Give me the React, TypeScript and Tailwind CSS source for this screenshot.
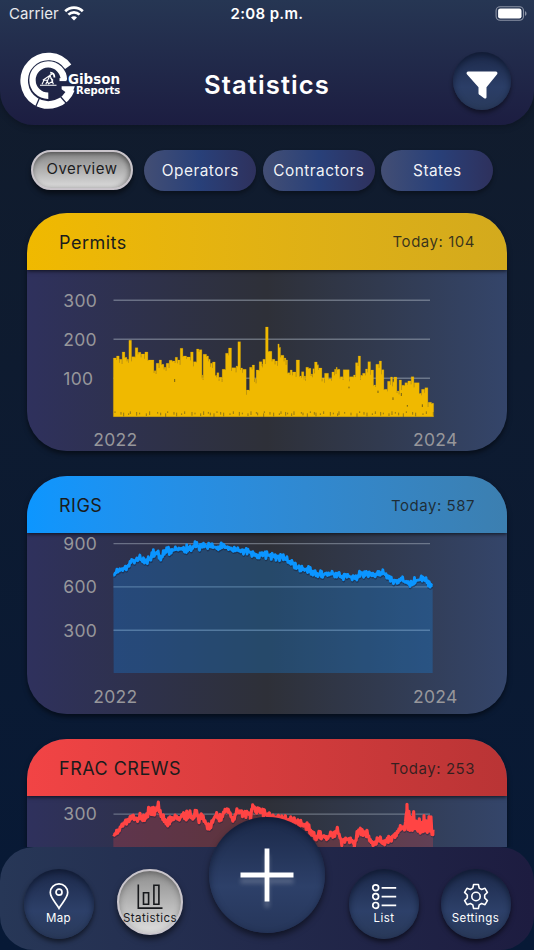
import type { ReactNode } from 'react';

type Point = [number, number];

// Chart samples are stored on a grid of a third of a pixel.
const permits: Point[] = [
  [280, 234], [289, 228], [298, 238], [306, 216], [315, 232], [321, 238], [326, 181], [335, 230], [345, 203], [354, 217],
  [363, 222], [374, 216], [384, 240], [402, 272], [408, 250], [417, 240], [425, 253], [432, 262], [438, 250], [447, 241],
  [457, 243], [465, 232], [473, 240], [480, 205], [489, 228], [500, 231], [511, 216], [520, 245], [529, 207], [537, 209],
  [546, 285], [549, 223], [560, 228], [566, 238], [571, 250], [577, 246], [586, 286], [590, 278], [597, 292], [606, 268],
  [616, 220], [625, 204], [635, 263], [648, 258], [653, 185], [662, 264], [668, 268], [679, 330], [688, 262], [696, 255],
  [704, 296], [708, 270], [717, 245], [726, 252], [728, 238], [736, 141], [745, 214], [756, 238], [765, 243], [773, 192],
  [778, 202], [782, 226], [792, 234], [798, 240], [803, 278], [810, 270], [817, 276], [828, 240], [839, 288], [844, 275],
  [852, 288], [857, 262], [866, 265], [873, 282], [878, 266], [883, 246], [892, 254], [896, 264], [906, 294], [913, 280],
  [926, 296], [935, 276], [943, 268], [948, 262], [952, 268], [960, 290], [969, 269], [988, 290], [1000, 285], [1006, 248],
  [1014, 228], [1022, 286], [1027, 280], [1036, 267], [1043, 245], [1052, 270], [1061, 315], [1067, 253], [1077, 243],
  [1085, 269], [1092, 328], [1102, 304], [1111, 291], [1118, 305], [1121, 291], [1131, 333], [1137, 300], [1145, 316],
  [1154, 308], [1163, 303], [1173, 290], [1182, 308], [1198, 340], [1204, 328], [1214, 323], [1224, 367], [1235, 370],
];

const rigs: Point[] = [
  [280, 316], [300, 300], [322, 291], [335, 272], [345, 273], [357, 264], [365, 268], [374, 280], [390, 268], [400, 252],
  [412, 252], [422, 262], [440, 243], [458, 242], [480, 236], [500, 237], [515, 238], [525, 227], [545, 232], [555, 228],
  [590, 233], [612, 230], [640, 240], [665, 243], [685, 245], [712, 258], [735, 255], [760, 258], [790, 264], [810, 277],
  [840, 297], [860, 300], [880, 307], [905, 316], [920, 313], [952, 312], [962, 322], [975, 317], [1005, 325], [1020, 312],
  [1045, 310], [1060, 317], [1075, 309], [1095, 312], [1115, 332], [1135, 332], [1145, 330], [1170, 345], [1185, 333],
  [1210, 328], [1225, 342], [1238, 348],
];

const fracCrews: Point[] = [
  [340, 314], [350, 312], [358, 300], [366, 284], [385, 270], [400, 258], [410, 270], [420, 262], [435, 272], [448, 240],
  [455, 247], [465, 247], [475, 230], [483, 250], [490, 268], [503, 286], [510, 264], [520, 270], [530, 262], [538, 268],
  [548, 252], [560, 258], [570, 254], [580, 270], [587, 250], [597, 266], [604, 262], [612, 272], [630, 300], [640, 270],
  [650, 250], [658, 268], [665, 268], [675, 240], [685, 242], [700, 272], [712, 243], [725, 247], [735, 255], [745, 250],
  [752, 260], [758, 228], [770, 242], [785, 247], [800, 255], [840, 268], [880, 272], [902, 282], [916, 288], [931, 302],
  [946, 320], [961, 318], [981, 325], [996, 313], [1012, 304], [1026, 336], [1046, 327], [1063, 342], [1073, 310],
  [1081, 298], [1091, 312], [1101, 307], [1111, 336], [1126, 342], [1133, 325], [1146, 340], [1166, 330], [1186, 312],
  [1201, 300], [1208, 290], [1214, 302], [1218, 262], [1221, 234], [1224, 300], [1227, 258], [1230, 298], [1233, 262],
  [1237, 302], [1241, 258], [1245, 304], [1249, 280], [1254, 318], [1258, 276], [1262, 314], [1266, 280], [1269, 308],
  [1272, 258], [1275, 307], [1279, 276], [1283, 308], [1287, 266], [1290, 308], [1293, 264], [1296, 312], [1299, 300],
];

// Bars touch each other except for a narrow slit near the top.
function stepPath(points: Point[], base: number) {
  let d = `M${points[0][0]} ${base}V${points[0][1]}`;
  for (let i = 1; i < points.length; i++) {
    const [x, y] = points[i];
    const notch = Math.max(points[i - 1][1], y) + 2 + (i % 4) * 4;
    d += `H${x - 0.4}V${notch}H${x + 0.6}V${y}`;
  }
  return `${d}H1241V${base}Z`;
}

// Fills the gaps between samples with small day-to-day jitter.
function jitter(points: Point[], amount: number) {
  let seed = 11;
  let sign = 1;
  const out: Point[] = [];
  for (let i = 0; i < points.length - 1; i++) {
    const [x0, y0] = points[i];
    const [x1, y1] = points[i + 1];
    for (let x = x0; x < x1; x += 2.7) {
      seed = (seed * 16807) % 2147483647;
      sign = -sign;
      const size = (seed / 2147483647) ** 2;
      const y = y0 + ((y1 - y0) * (x - x0)) / (x1 - x0);
      out.push([x, y + sign * size * amount]);
    }
  }
  out.push(points[points.length - 1]);
  return out;
}

const toLine = (points: Point[]) => 'M' + points.map(([x, y]) => `${x} ${y.toFixed(1)}`).join('L');

function Grid({ rows, yearY }: { rows: [string, number][]; yearY?: number }) {
  return (
    <g fontSize="17.5" letterSpacing=".3" fill="#97979b">
      {rows.map(([label, y]) => (
        <g key={label}>
          <text x="36.3" y={y + 6.3}>{label}</text>
          <path d={`M86.5 ${y}H403`} stroke="#a5afbd" strokeOpacity=".5" strokeWidth="1.4" />
        </g>
      ))}
      {yearY && (
        <>
          <text x="66.2" y={yearY}>2022</text>
          <text x="386" y={yearY}>2024</text>
        </>
      )}
    </g>
  );
}

function PermitsChart() {
  return (
    <svg width="480" height="180" viewBox="0 0 480 180" className="block">
      <Grid rows={[['300', 30.2], ['200', 69.2], ['100', 108.3]]} yearY={176.4} />
      <g transform="translate(-7 10) scale(.33333)">
        <path d={stepPath(permits, 410)} fill="#f0b900" stroke="#f0b900" strokeWidth=".6" />
        {permits.filter((_, i) => i % 3 !== 1).map(([x], i) => (
          <path key={x} d={`M${x + 5} ${394 + (i % 4) * 2}v${5 + (i % 3) * 3}`} stroke="#7a681d" strokeWidth="2.4" />
        ))}
        <path d="M464 297v9M987 320v5M1074 332v7M1119 352v8M1144 339v9M1207 373v8M1162 375v5" stroke="#735f16" strokeWidth="3" />
      </g>
    </svg>
  );
}

function RigsChart() {
  const line = toLine(jitter(rigs, 12));
  return (
    <svg width="480" height="181" viewBox="0 0 480 181" className="block">
      <Grid rows={[['900', 10.6], ['600', 53.9], ['300', 97.2]]} yearY={169.7} />
      <g transform="translate(-7 -63.3) scale(.33333)" strokeLinejoin="round">
        <path d={`${line}V610H281Z`} fill="#0e95ff" fillOpacity=".25" />
        <path d={line} fill="none" stroke="#15203a" strokeOpacity=".5" strokeWidth="8.5" transform="translate(1 4)" />
        <path d={line} fill="none" stroke="#0b95ff" strokeWidth="8.5" />
      </g>
    </svg>
  );
}

function FracChart() {
  const line = toLine(jitter(fracCrews, 14));
  return (
    <svg width="480" height="181" viewBox="0 0 480 181" className="block">
      <Grid rows={[['300', 18.1]]} />
      <g transform="translate(-27 -66.3) scale(.33333)" strokeLinejoin="round">
        <path d={`${line}V620H341Z`} fill="#ff4444" fillOpacity=".23" />
        <path d={line} fill="none" stroke="#15203a" strokeOpacity=".4" strokeWidth="9.5" transform="translate(1 4)" />
        <path d={line} fill="none" stroke="#ff4444" strokeWidth="9.5" />
      </g>
    </svg>
  );
}

function StatCard({ title, today, bar, children }: { title: string; today: number; bar: string; children: ReactNode }) {
  return (
    <section className="h-[237.5px] shrink-0 overflow-hidden rounded-[40px] bg-linear-to-r from-[#2f315d] via-[#2e3038] to-[#34456a] shadow-[0_3px_5px_rgba(0,0,0,0.5)]">
      <div className={`relative flex h-[57px] items-center justify-between bg-linear-to-r px-8 pt-[2px] shadow-[0_1px_4px_rgba(0,0,0,0.7)] ${bar}`}>
        <h2 className="text-[18px] tracking-[0.5px] text-[#1a1c1c]">{title}</h2>
        <span className="text-[15px] tracking-[0.53px] text-[#1a1c1c]/85">Today: {today}</span>
      </div>
      {children}
    </section>
  );
}

function Logo() {
  return (
    <svg width="104" height="58" viewBox="19 52.5 104 58" fill="none" stroke="#fff">
      <path d="M68.2 67.3A24.2 24.2 0 1 0 71 89.8" strokeWidth="7.6" />
      <path d="M48.3 96.3A15.7 15.7 0 1 1 63.9 80.4" strokeWidth="6.4" />
      <path d="M61.6 86.7h13.2l-2.6 7.3-6.5-1.2-4.1-3z" fill="#fff" stroke="none" />
      <path d="M59.5 78.6h7v3h-7z" fill="#fff" stroke="none" />
      <path d="M39.7 98l-4.1 9.4M60.2 96.8l6.5 7.4" stroke="#212748" strokeWidth="1.3" />
      <path d="M40 85.7h16.5M42 84.7l2-4h3l1.7 4M45.8 84.7l4.2-8.8 3.4 8.8M42.8 80.8l9.6-6.5M49 84l4-2.5M50.3 78l2.8 3" strokeWidth="1.1" />
      <path d="M50.2 73.2c2.8.2 4.2 2 4.2 4.8" strokeWidth="1.8" />
      <g fill="#fff" stroke="none" fontFamily="DejaVu Sans, sans-serif" fontWeight="700">
        <text x="68" y="84.9" fontSize="14" textLength="52" lengthAdjust="spacingAndGlyphs">Gibson</text>
        <text x="76" y="94.8" fontSize="11" textLength="44.3" lengthAdjust="spacingAndGlyphs">Reports</text>
      </g>
    </svg>
  );
}

function StatusBar() {
  return (
    <div className="grid h-7 grid-cols-3 items-center pr-[7px] pl-[9px] text-[15px] text-white">
      <div className="flex items-center gap-[5px]">
        <span className="tracking-[0.1px] text-white/90">Carrier</span>
        <svg width="20" height="15" viewBox="0 0 20 15" fill="none" stroke="#fff" strokeWidth="2.7" className="-mt-0.5">
          <path d="M1.2 5.2C6.2.3 13.8.3 18.8 5.2M4.4 8.6c3.2-3.1 8-3.1 11.2 0" />
          <path d="M10 14.5l-3-3.1c1.7-1.6 4.3-1.6 6 0z" fill="#fff" stroke="none" />
        </svg>
      </div>
      <span className="-ml-0.5 text-center font-semibold tracking-[0.35px]">2:08 p.m.</span>
      <svg width="32" height="15" viewBox="0 0 32 15" className="-mt-[2px] justify-self-end">
        <rect x="1.1" y=".7" width="27.4" height="13.6" rx="4" fill="none" stroke="#8b93a5" strokeWidth="1.1" />
        <rect x="3.1" y="2.6" width="23.4" height="9.8" rx="2.2" fill="#fff" />
        <path d="M30 5.2c2 .7 2 3.9 0 4.6z" fill="#8b93a5" />
      </svg>
    </div>
  );
}

function NavButton({ label, active, children }: { label: string; active?: boolean; children: ReactNode }) {
  const look = active
    ? 'h-[66px] w-[66px] border-2 border-[#c9c5cb] bg-linear-to-b from-[#8e8e8e] to-[#dedede] pt-[12px] text-[#17191c] shadow-[0_4px_6px_rgba(0,0,0,0.55),inset_0_2px_6px_rgba(0,0,0,0.3)]'
    : 'h-[70px] w-[70px] bg-linear-to-b from-[#1c294a] via-[#2d4069] via-60% to-[#293959] pt-[14px] text-white shadow-[0_3px_5px_rgba(0,0,0,0.55),inset_0_3px_6px_rgba(5,12,30,0.55)]';
  return (
    <button className={`flex flex-col items-center rounded-full ${look}`}>
      {children}
      <span className="text-[11.5px] leading-4 tracking-[0.45px] whitespace-nowrap">{label}</span>
    </button>
  );
}

const tabs = ['Operators', 'Contractors', 'States'];

export default function App() {
  return (
    <div className="flex h-[950px] w-[534px] flex-col overflow-hidden bg-linear-to-b from-[#121c2c] to-[#071936] font-['Inter',sans-serif]">
      <header className="h-[125px] shrink-0 rounded-b-[34px] bg-linear-to-b from-[#263653] to-[#1c1d41] shadow-[0_2px_6px_rgba(0,0,0,0.25)]">
        <StatusBar />
        <div className="grid h-[106px] grid-cols-[1fr_auto_1fr] items-center pr-[23px] pl-[19px]">
          <Logo />
          <h1 className="mt-[9px] ml-[4px] text-[25.6px] font-semibold tracking-[1.1px] text-white">Statistics</h1>
          <button className="grid h-[58px] w-[58px] place-items-center justify-self-end rounded-full bg-linear-to-b from-[#1c294a] via-[#2b3e67] via-60% to-[#293a5b] shadow-[0_3px_4px_rgba(0,0,0,0.45),inset_0_3px_6px_rgba(5,12,30,0.55)]">
            <svg width="32" height="28" viewBox="0 0 32 28" className="mt-2">
              <path d="M2.3.4h27.4c1.7 0 2.2 1.7 1.4 2.9L20.5 16.2V26c0 1.6-1.3 1.9-2.4 1.2l-4.3-3.1c-.9-.6-1.3-1.2-1.3-2.2v-5.7L.9 3.3C.1 2.1.7.4 2.3.4z" fill="#fff" />
            </svg>
          </button>
        </div>
      </header>

      <main className="flex min-h-0 flex-1 flex-col overflow-hidden px-[27px] pt-[24.5px]">
        <div className="mb-[22.1px] flex h-[41.5px] shrink-0 gap-[6.5px] pl-[4px] text-[15.4px] tracking-[0.48px]">
          <button className="mr-[4.8px] h-[40px] w-[102px] rounded-full border-2 border-[#c9c4ca] bg-linear-to-b from-[#888] to-[#dcdcdc] text-[15px] text-[#1c1c1e] shadow-[0_4px_5px_rgba(0,0,0,0.5),inset_0_2px_5px_rgba(0,0,0,0.3),inset_-3px_0_4px_rgba(0,0,0,0.2)]">
            Overview
          </button>
          {tabs.map((tab) => (
            <button key={tab} className="h-[41.5px] w-[112px] rounded-full bg-linear-to-r from-[#434e74] via-[#284079] to-[#2e315d] pt-px text-white/95 shadow-[0_3px_4px_rgba(0,0,0,0.35)]">
              {tab}
            </button>
          ))}
        </div>
        <div className="flex flex-col gap-[25.7px]">
          <StatCard title="Permits" today={104} bar="from-[#f0b900] to-[#d3aa1d]">
            <PermitsChart />
          </StatCard>
          <StatCard title="RIGS" today={587} bar="from-[#0c96ff] to-[#3c7fb0]">
            <RigsChart />
          </StatCard>
          <StatCard title="FRAC CREWS" today={253} bar="from-[#f24445] to-[#b93435]">
            <FracChart />
          </StatCard>
        </div>
      </main>

      <nav className="relative grid h-[103px] shrink-0 grid-cols-[93px_90px_144px_90px_93px] items-start justify-items-center rounded-[34px] bg-linear-to-r from-[#273757] to-[#1d1c40] px-3 pt-[22px]">
        <NavButton label="Map">
          <svg width="20" height="27" viewBox="0 0 20 27" fill="none" stroke="currentColor" strokeWidth="1.7">
            <path d="M10 25.3C7.5 20.5 1.3 15 1.3 9.6a8.7 8.7 0 0 1 17.4 0c0 5.4-6.2 10.9-8.7 15.7z" />
            <circle cx="10" cy="9.2" r="3" />
          </svg>
        </NavButton>
        <NavButton label="Statistics" active>
          <svg width="26" height="27" viewBox="0 0 26 27" className="shrink-0" fill="none" stroke="currentColor" strokeWidth="1.6">
            <path d="M1.3 1.5v23.6H25.5M6.5 9.7h5.1v11.6H6.5zM16.9 2.3h5v19h-5z" />
          </svg>
        </NavButton>
        <button className="-mt-[52px] grid h-[116px] w-[116px] place-items-center rounded-full bg-linear-to-b from-[#1b2949] via-[#2d4069] via-60% to-[#26365a] shadow-[0_4px_6px_rgba(0,0,0,0.5),inset_0_3px_7px_rgba(5,12,30,0.5)]">
          <svg width="54" height="54" viewBox="0 0 54 54" stroke="#fff" strokeWidth="4.8" className="overflow-visible drop-shadow-[0_6px_2px_rgba(255,255,255,0.2)]">
            <path d="M27 .5v53M.5 27h53" />
          </svg>
        </button>
        <NavButton label="List">
          <svg width="26" height="27" viewBox="0 0 26 27" fill="none" stroke="currentColor" strokeWidth="1.7">
            <path d="M10.6 4.8H25.2M10.6 13.6H25.2M10.6 22.4H25.2" />
            <circle cx="4.7" cy="4.8" r="2.9" />
            <circle cx="4.7" cy="13.6" r="2.9" />
            <circle cx="4.7" cy="22.4" r="2.9" />
          </svg>
        </NavButton>
        <NavButton label="Settings">
          <svg width="26" height="27" viewBox="0 0 26 27" fill="none" stroke="currentColor" strokeWidth="1.6" strokeLinejoin="round">
            <path d="M10.6 1.5h4.8l.8 3.6 2.4 1.4 3.4-1.2 2.4 4.1-2.7 2.6v3l2.7 2.6-2.4 4.1-3.4-1.2-2.4 1.4-.8 3.6h-4.8l-.8-3.6-2.4-1.4L4 21.7l-2.4-4.1L4.3 15v-3L1.6 9.4 4 5.3l3.4 1.2 2.4-1.4z" />
            <circle cx="13" cy="13.5" r="4.2" />
          </svg>
        </NavButton>
      </nav>
    </div>
  );
}
